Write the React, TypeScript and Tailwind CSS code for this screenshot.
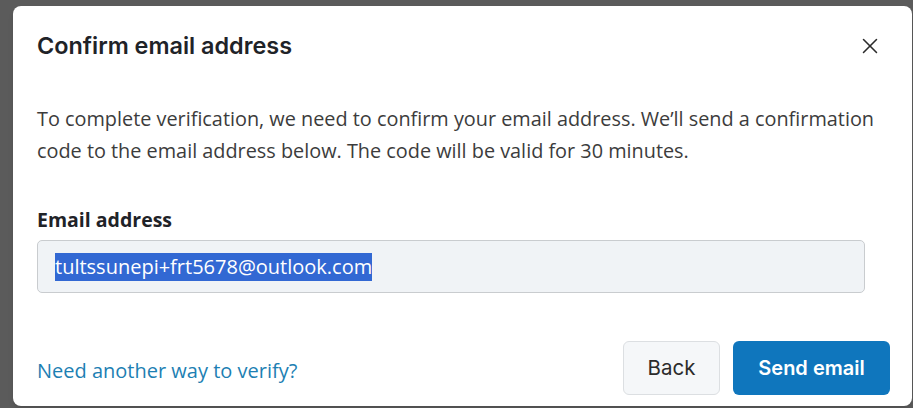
import React from 'react'
import { X } from 'lucide-react'

const ConfirmEmailDialog: React.FC = () => {
    return (
        <div className="w-[899px] h-[400px] bg-white rounded-[8px] flex flex-col shadow-md">
            {/* Header */}
            <div className="flex items-center justify-between pl-[24px] pr-[29px] pt-[27px]">
                <h2 className="text-[23.4px] font-semibold text-[#1f2328] leading-[26px] font-['Inter',sans-serif]">
                    Confirm email address
                </h2>
                <X size={26} strokeWidth={1.4} className="text-[#2b2b2b]" />
            </div>

            {/* Body */}
            <div className="px-[24px] pt-[44px] text-[19.85px] leading-[32px] text-[#3c3c3c] font-['Open_Sans',sans-serif]">
                <p>
                    To complete verification, we need to confirm your email address. We’ll send a confirmation code to the email address below. The code will be valid for 30 minutes.
                </p>
            </div>

            {/* Field */}
            <div className="px-[24px] pt-[40px] font-['Open_Sans',sans-serif]">
                <label className="block text-[19.5px] font-bold text-[#1f2328] leading-[26px] mb-[7px]">Email address</label>
                <div className="w-[828px] h-[53px] bg-[#f0f3f6] border border-[#c9cccf] rounded-[5px] flex items-center pl-[17px]">
                    <span className="bg-[#3268d3] text-white text-[20px] leading-[28px]">tultssunepi+frt5678@outlook.com</span>
                </div>
            </div>

            {/* Footer */}
            <div className="mt-auto flex items-center justify-between pl-[24px] pr-[22px] pb-[11px]">
                <a className="mt-[5px] text-[20px] text-[#1d7fb3] font-['Open_Sans',sans-serif]">Need another way to verify?</a>
                <div className="flex gap-[13px] font-['Inter',sans-serif]">
                    <button className="w-[97px] h-[54px] rounded-[6px] bg-[#f5f7f9] border border-[#dcdfe2] text-[20.5px] text-[#2b2b2b]">
                        Back
                    </button>
                    <button className="w-[157px] h-[54px] rounded-[6px] bg-[#0f76bd] text-[20px] font-semibold text-white">
                        Send email
                    </button>
                </div>
            </div>
        </div>
    )
}

export default function App() {
    return (
        <div className="w-[913px] h-[408px] bg-[#5b5b5b] overflow-hidden pl-[13px] pt-[6px]">
            <ConfirmEmailDialog />
        </div>
    )
}
